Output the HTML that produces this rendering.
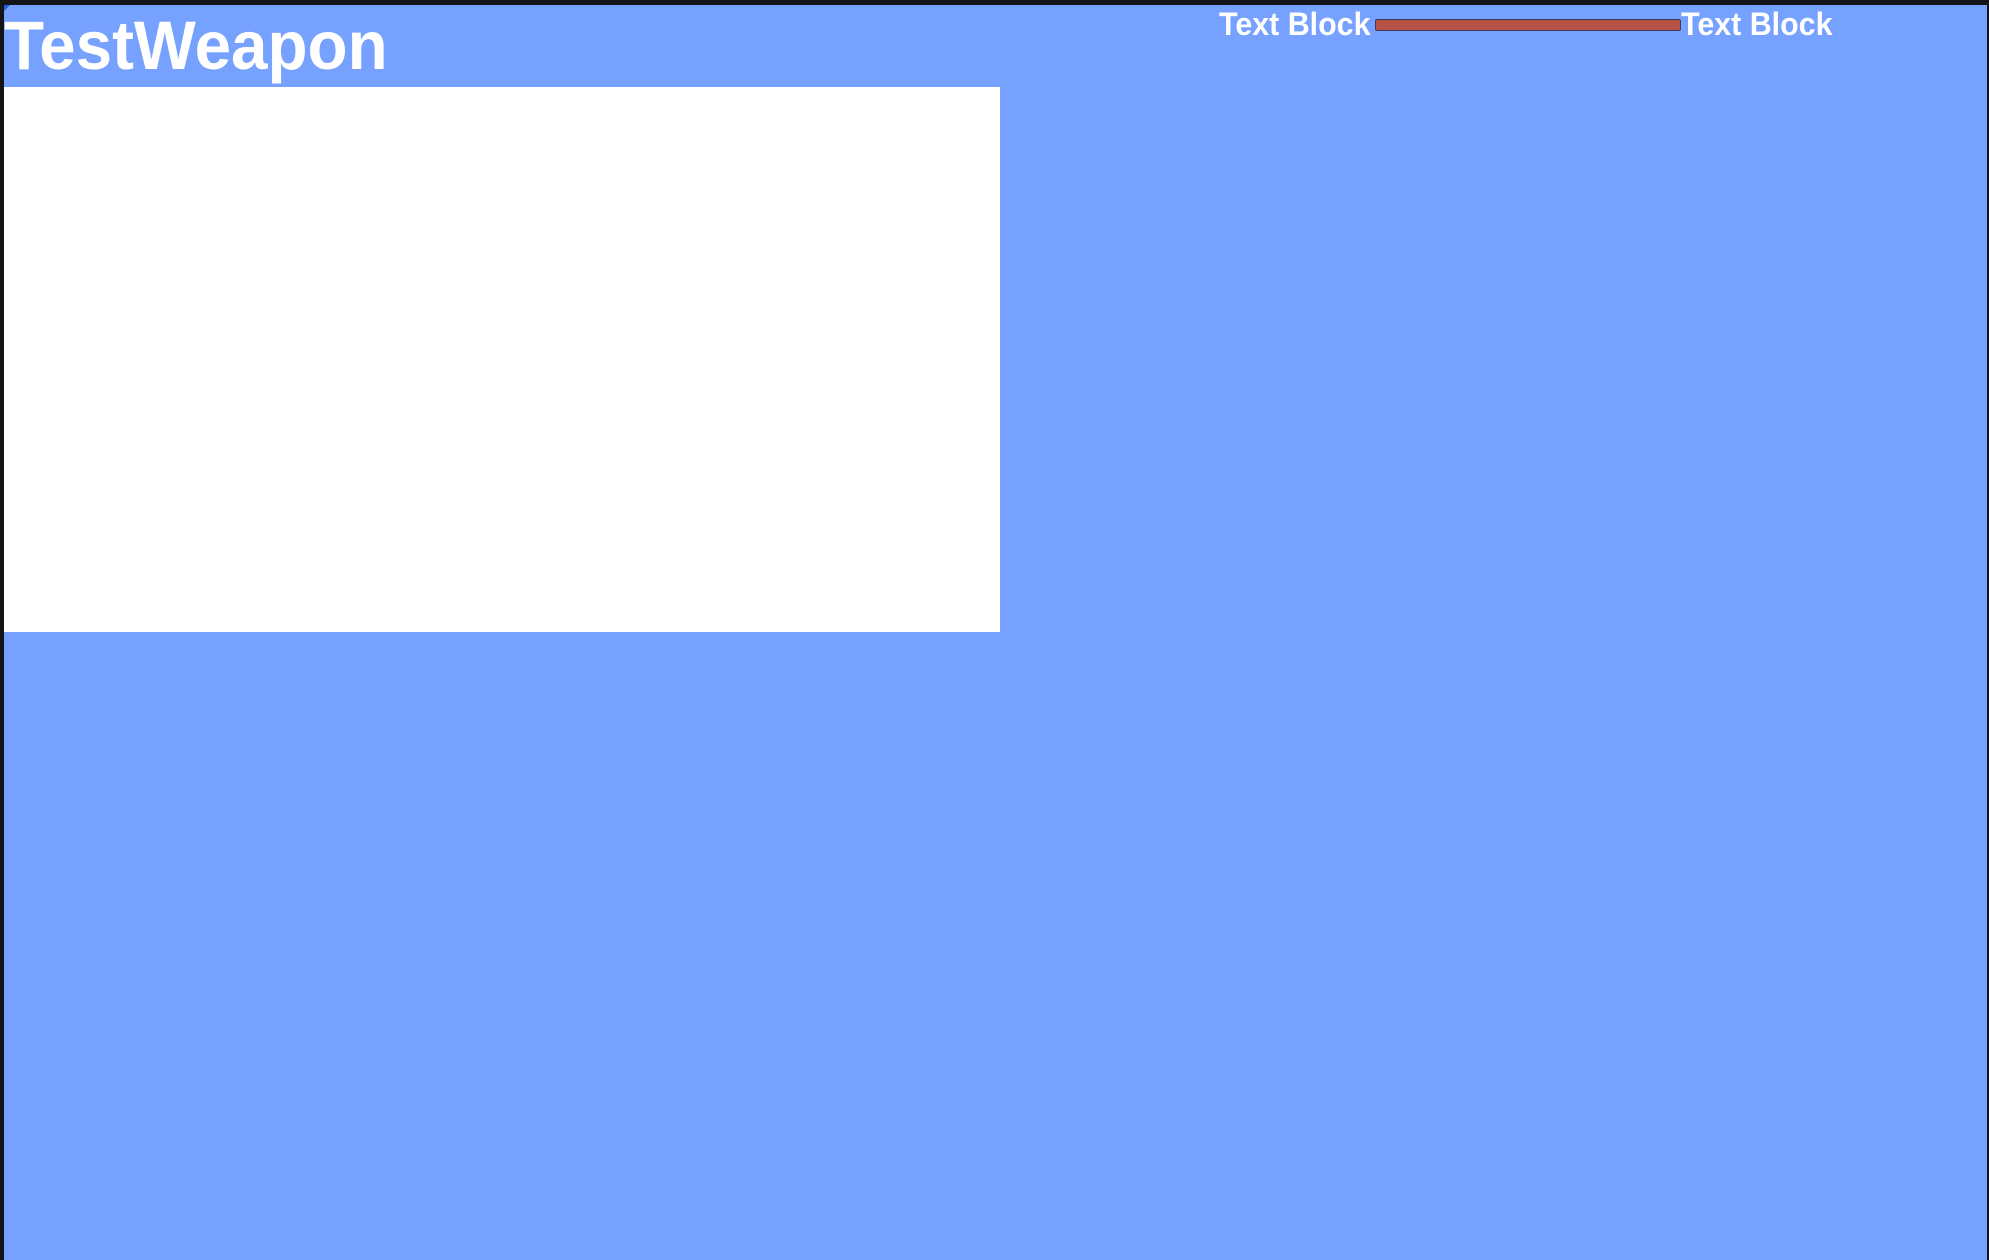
<!DOCTYPE html>
<html><head><meta charset="utf-8"><style>
html,body{margin:0;padding:0;width:1989px;height:1260px;overflow:hidden;background:#121418;}
.main{position:absolute;left:4px;top:5px;width:1983px;height:1255px;background:#76a1fe;}
.white{position:absolute;left:4px;top:87px;width:996px;height:545px;background:#fff;}
.title{position:absolute;left:4px;top:1px;font:bold 69px/90px "Liberation Sans",sans-serif;color:#fff;transform:scaleX(0.95);transform-origin:0 0;white-space:nowrap;}
.tb{position:absolute;top:4px;font:bold 32px/40px "Liberation Sans",sans-serif;color:#fff;transform:scaleX(0.95);transform-origin:0 0;white-space:nowrap;}
.bar{position:absolute;left:1375px;top:19px;width:304px;height:10px;background:#b65245;border:1px solid #3b3d5e;border-radius:2px;}
.corner{position:absolute;left:4px;top:5px;width:0;height:0;border-top:6px solid #1a62d8;border-right:6px solid transparent;}
</style></head><body>
<div class="main"></div>
<div class="corner"></div>
<div class="white"></div>
<div class="title">TestWeapon</div>
<div class="tb" style="left:1219px">Text Block</div>
<div class="bar"></div>
<div class="tb" style="left:1681px">Text Block</div>
</body></html>
